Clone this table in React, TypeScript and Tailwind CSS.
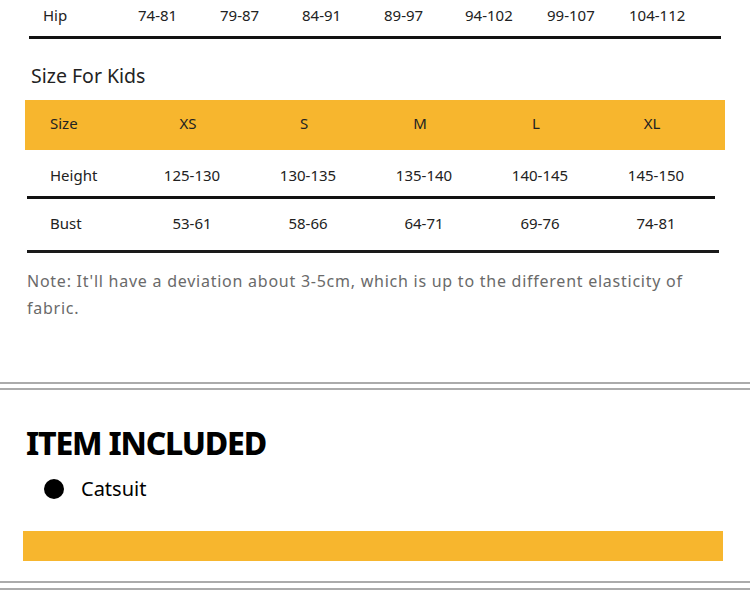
import React from "react";

const hip = ["74-81", "79-87", "84-91", "89-97", "94-102", "99-107", "104-112"];
const sizes = ["XS", "S", "M", "L", "XL"];
const heights = ["125-130", "130-135", "135-140", "140-145", "145-150"];
const bust = ["53-61", "58-66", "64-71", "69-76", "74-81"];

export default function App() {
  return (
    <div
      className="w-[750px] h-[598px] bg-white overflow-hidden flex flex-col text-[#222]"
      style={{ fontFamily: '"Noto Sans", "Noto Sans CJK SC", sans-serif' }}
    >
      {/* Hip row (end of adult table) */}
      <div className="ml-[29px] w-[692px] h-[39px] border-b-[3px] border-[#111] grid grid-cols-[109px_82px_82px_82px_81px_82px_82px_82px] pt-[4px] text-[15px] leading-[22px]">
        <div className="pl-[14px]">Hip</div>
        {hip.map((v) => (
          <div key={v}>{v}</div>
        ))}
      </div>

      {/* Title */}
      <div className="mt-[23px] ml-[31px] h-[28px] text-[19.5px] leading-[28px] text-[#222]">
        Size For Kids
      </div>

      {/* Kids table */}
      <div className="mt-[10px] ml-[25px] w-[700px] flex flex-col text-[15px]">
        <div className="h-[50px] pb-[4px] bg-[#f7b62e] grid grid-cols-[109px_116px_116px_116px_116px_116px] items-center">
          <div className="pl-[25px]">Size</div>
          {sizes.map((s) => (
            <div key={s} className="text-center pr-[8px]">
              {s}
            </div>
          ))}
        </div>
        <div className="ml-[2px] w-[688px] h-[49px] border-b-[3px] border-[#111] grid grid-cols-[107px_116px_116px_116px_116px_116px] items-center pt-[4px]">
          <div className="pl-[23px]">Height</div>
          {heights.map((s) => (
            <div key={s} className="text-center">
              {s}
            </div>
          ))}
        </div>
        <div className="ml-[2px] w-[692px] h-[54px] pb-[2px] border-b-[3px] border-[#1a1a1a] grid grid-cols-[107px_116px_116px_116px_116px_116px] items-center">
          <div className="pl-[23px]">Bust</div>
          {bust.map((s) => (
            <div key={s} className="text-center">
              {s}
            </div>
          ))}
        </div>
      </div>

      {/* Note */}
      <div className="mt-[15px] ml-[27px] text-[16px] leading-[27px] text-[#6a6a6a] tracking-[0.75px]">
        Note: It'll have a deviation about 3-5cm, which is up to the different elasticity of
        <br />
        fabric.
      </div>

      {/* Divider */}
      <div className="mt-[60px] h-[2px] bg-[#ababab]" />
      <div className="mt-[4px] h-[2px] bg-[#ababab]" />

      {/* Item included */}
      <div className="mt-[33px] ml-[26px] h-[40px] text-[32px] leading-[40px] font-extrabold tracking-[-1.2px] text-black">
        ITEM INCLUDED
      </div>
      <div className="mt-[12px] ml-[44px] h-[28px] flex items-center gap-[17px]">
        <div className="w-[20px] h-[20px] rounded-full bg-black" />
        <span className="text-[20px] leading-[28px] text-black">Catsuit</span>
      </div>

      <div className="mt-[28px] ml-[23px] w-[700px] h-[30px] bg-[#f7b62e]" />

      <div className="mt-[20px] h-[2px] bg-[#ababab]" />
      <div className="mt-[5px] h-[2px] bg-[#ababab]" />
    </div>
  );
}
